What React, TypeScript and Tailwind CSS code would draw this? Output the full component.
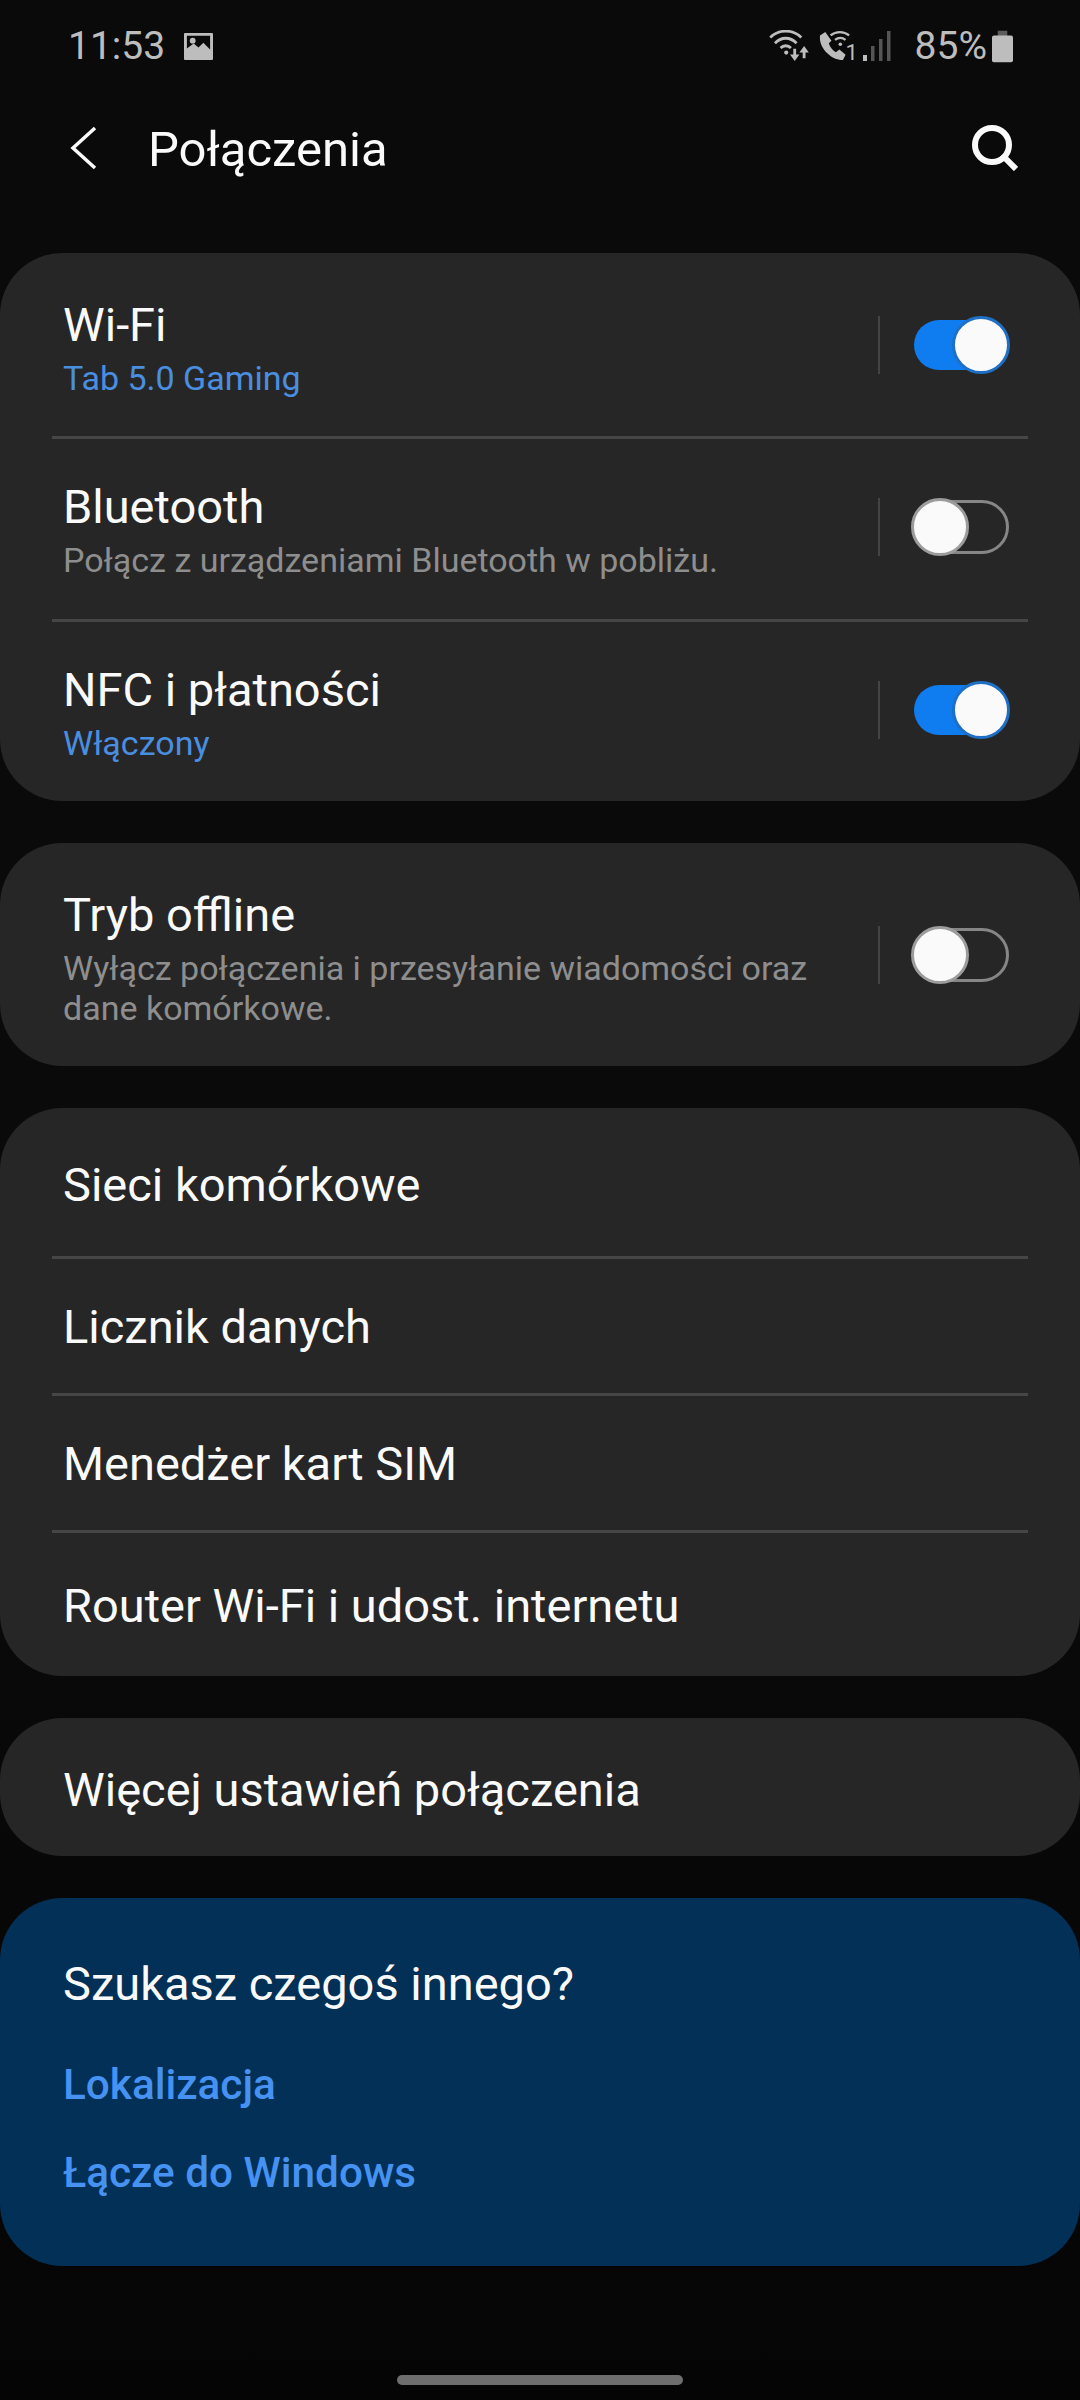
import React from 'react';

interface RowProps {
  title: string;
  subtitle?: string;
  accent?: boolean;
  on?: boolean;
}

const Toggle = ({ on }: { on: boolean }) => (
  <div className="relative h-[58px] w-[99px] shrink-0">
    {on ? (
      <>
        <div className="absolute left-[3px] top-[4px] h-[50px] w-[90px] rounded-full bg-[#0f7df0]" />
        <div className="absolute right-0 top-0 h-[58px] w-[58px] rounded-full border-[3px] border-[#1f6fc4] bg-[#fafafa]" />
      </>
    ) : (
      <>
        <div className="absolute left-[2px] top-[2px] h-[54px] w-[96px] rounded-full border-[3px] border-[#868686]" />
        <div className="absolute left-0 top-0 h-[58px] w-[58px] rounded-full border-[3px] border-[#9c9c9c] bg-[#fafafa]" />
      </>
    )}
  </div>
);

const ToggleRow = ({ title, subtitle, accent, on = false }: RowProps) => (
  <div className="flex items-center pl-[63px] pr-[70px]">
    <div className="min-w-0 flex-1 pt-[3px]">
      <div className="text-[47px] leading-[60px] text-[#fafafa]">{title}</div>
      <div className={`mt-[3px] w-[780px] text-[34px] leading-[40px] ${accent ? 'text-[#4a8ee0]' : 'text-[#8e8e8e]'}`}>
        {subtitle}
      </div>
    </div>
    <div className="mr-[31px] h-[58px] w-[2px] shrink-0 bg-[#444444]" />
    <Toggle on={on} />
  </div>
);

const Divider = () => <div className="mx-[52px] h-[3px] bg-[#464646]" />;

const Card = ({ className, children }: { className: string; children: React.ReactNode }) => (
  <section className={`rounded-[62px] bg-[#262626] ${className}`}>{children}</section>
);

const LinkRow = ({ label, className }: { label: string; className: string }) => (
  <div className={`flex items-center pl-[63px] text-[47px] text-[#fafafa] ${className}`}>{label}</div>
);

const StatusBar = () => (
  <div className="flex h-[90px] items-center justify-between pl-[68px] pr-[67px] pt-[2px] text-[39px] text-[#bdbdbd]">
    <div className="flex items-center gap-[18px]">
      <span>11:53</span>
      <svg width="31" height="29" viewBox="0 0 32 30">
        <path
          fillRule="evenodd"
          fill="#bdbdbd"
          d="M2 1h28a1 1 0 0 1 1 1v26a1 1 0 0 1-1 1H2a1 1 0 0 1-1-1V2a1 1 0 0 1 1-1ZM4 4v13l7-5 5 4 5-5 7 7V4H4Z"
        />
        <circle cx="10" cy="9" r="3" fill="#bdbdbd" />
      </svg>
    </div>
    <div className="flex items-center">
      {/* wifi with traffic arrows */}
      <svg width="42" height="32" viewBox="0 0 44 34" fill="none" stroke="#bdbdbd" strokeWidth="3" className="mr-[7px]">
        <path d="M1 8C10 -1 25 -1 34 8" />
        <path d="M6 14C13 7 22 7 29 14" />
        <path d="M12 19C15 16 20 16 23 19" />
        <circle cx="18" cy="24" r="2.2" fill="#bdbdbd" stroke="none" />
        <path d="M27 20v8M37 30v-8" />
        <path d="M22 26h10l-5 7ZM32 24h10l-5-7Z" fill="#bdbdbd" stroke="none" />
      </svg>
      {/* call over wifi, sim 1 */}
      <svg width="34" height="30" viewBox="0 0 36 34">
        <path fill="#bdbdbd" d="M7 1 1 5c-1 8 3 15 8 20s11 8 18 8l3-6-7-6-4 3c-4-2-7-6-8-10l3-3L7 1Z" />
        <g fill="none" stroke="#bdbdbd" strokeWidth="2.5">
          <path d="M13 5C19 0 28 0 34 5" />
          <path d="M18 10C22 7 26 7 30 10" />
        </g>
        <circle cx="24" cy="15" r="2" fill="#bdbdbd" />
      </svg>
      <span className="-ml-[6px] mr-[9px] mt-[14px] w-[8px] text-[22px] leading-none">1</span>
      <svg width="28" height="30" viewBox="0 0 28 30" className="mr-[24px]">
        <rect x="0" y="24" width="4" height="6" fill="#bdbdbd" />
        <rect x="8" y="15" width="3.5" height="15" fill="#555555" />
        <rect x="16" y="8" width="3.5" height="22" fill="#555555" />
        <rect x="24" y="0" width="3.5" height="30" fill="#555555" />
      </svg>
      <span>85%</span>
      <svg width="21" height="33" viewBox="0 0 22 33" className="ml-[5px]">
        <rect x="6" y="0" width="10" height="6" fill="#5c5c5c" />
        <rect x="0" y="5" width="22" height="28" rx="2" fill="#bdbdbd" />
      </svg>
    </div>
  </div>
);

const App = () => (
  <div className="flex h-[2400px] w-[1080px] flex-col overflow-hidden bg-linear-to-b from-[#0a0a0a] from-60% to-[#050505] font-['Roboto',sans-serif]">
    <StatusBar />

    <header className="flex h-[118px] items-center pb-[2px] pl-[70px] pr-[62px]">
      <svg width="28" height="44" viewBox="0 0 28 44" fill="none" stroke="#fafafa" strokeWidth="3.5">
        <path d="M25 2 3 22l22 20" />
      </svg>
      <h1 className="ml-[50px] flex-1 pt-[3px] text-[49px] font-normal text-[#fafafa]">Połączenia</h1>
      <svg width="46" height="46" viewBox="0 0 46 46" fill="none" stroke="#fafafa" strokeWidth="6">
        <circle cx="20" cy="20" r="17" />
        <path d="M30 30 44 44" />
      </svg>
    </header>

    <div className="mt-[45px] flex flex-col gap-[42px]">
      <Card className="">
        <div className="flex h-[183px] flex-col justify-center">
          <ToggleRow title="Wi-Fi" subtitle="Tab 5.0 Gaming" accent on />
        </div>
        <Divider />
        <div className="flex h-[180px] flex-col justify-center pb-[4px]">
          <ToggleRow title="Bluetooth" subtitle="Połącz z urządzeniami Bluetooth w pobliżu." />
        </div>
        <Divider />
        <div className="flex h-[179px] flex-col justify-center pb-[4px]">
          <ToggleRow title="NFC i płatności" subtitle="Włączony" accent on />
        </div>
      </Card>

      <Card className="flex h-[223px] flex-col justify-center">
        <ToggleRow title="Tryb offline" subtitle="Wyłącz połączenia i przesyłanie wiadomości oraz dane komórkowe." />
      </Card>

      <Card className="">
        <LinkRow label="Sieci komórkowe" className="h-[148px] pt-[6px]" />
        <Divider />
        <LinkRow label="Licznik danych" className="h-[134px] pt-[3px]" />
        <Divider />
        <LinkRow label="Menedżer kart SIM" className="h-[134px] pt-[3px]" />
        <Divider />
        <LinkRow label="Router Wi-Fi i udost. internetu" className="h-[143px] pt-[3px]" />
      </Card>

      <Card className="">
        <LinkRow label="Więcej ustawień połączenia" className="h-[138px] pt-[6px]" />
      </Card>

      <section className="h-[368px] rounded-[62px] bg-[#033056] pl-[63px] pt-[56px]">
        <div className="text-[47px] leading-[60px] text-[#fafafa]">Szukasz czegoś innego?</div>
        <div className="mt-[43px] text-[42.3px] font-medium leading-[56px] text-[#4592f2]">Lokalizacja</div>
        <div className="mt-[32px] text-[42.3px] font-medium leading-[56px] text-[#4592f2]">Łącze do Windows</div>
      </section>
    </div>

    <div className="mx-auto mt-[109px] h-[10px] w-[286px] rounded-full bg-[#6e6e6e]" />
  </div>
);

export default App;
